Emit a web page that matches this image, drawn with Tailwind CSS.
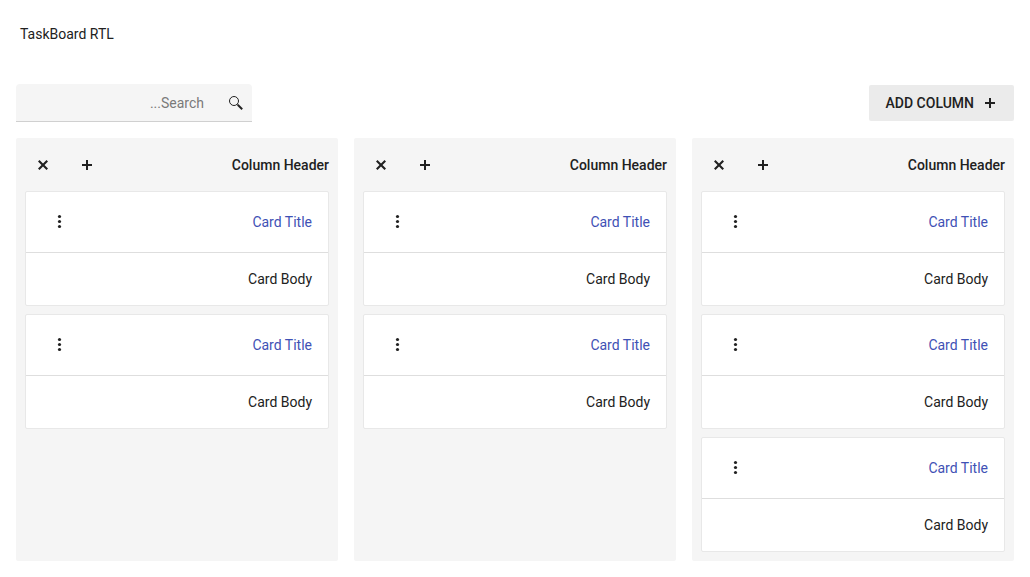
<!DOCTYPE html>
<html lang="en">
<head>
<meta charset="utf-8">
<title>TaskBoard RTL</title>
<script src="https://cdn.jsdelivr.net/npm/@tailwindcss/browser@4"></script>
</head>
<body class="h-[577px] overflow-hidden bg-white font-['Roboto',sans-serif] text-sm leading-5 text-[#212121]">
<svg class="hidden">
  <symbol id="plus" viewBox="0 0 16 16"><path d="M7 3h2v4h4v2H9v4H7V9H3V7h4z"/></symbol>
  <symbol id="close" viewBox="0 0 16 16"><path d="M4.5 3 8 6.5 11.5 3 13 4.5 9.5 8l3.5 3.5-1.5 1.5L8 9.5 4.5 13 3 11.5 6.5 8 3 4.5z"/></symbol>
  <symbol id="more" viewBox="0 0 16 16"><circle cx="7.5" cy="2.5" r="1.6"/><circle cx="7.5" cy="7.5" r="1.6"/><circle cx="7.5" cy="12.5" r="1.6"/></symbol>
  <symbol id="search" viewBox="0 0 16 16"><circle cx="6" cy="6" r="4.5" fill="none" stroke="currentColor" stroke-width="1"/><path d="M9 9.9 9.9 9l1 .6 4 4-1.4 1.4-4-4z"/></symbol>
</svg>
<h1 class="px-5 pt-6 font-normal">TaskBoard RTL</h1>
<main dir="rtl" class="px-4 pt-10">
  <div class="flex h-[38px] items-center justify-between">
    <button class="flex h-9 w-[145px] items-center gap-2 rounded-xs bg-[#ebebeb] px-4 font-medium">
      <svg class="size-4 shrink-0 fill-current"><use href="#plus"/></svg><span class="whitespace-nowrap">ADD COLUMN</span>
    </button>
    <div class="flex h-[38px] w-[236px] items-center rounded-t border-b border-[#d0d0d0] bg-[#f5f5f5] pl-2">
      <svg class="ml-6 mr-2 size-4 shrink-0 fill-current"><use href="#search"/></svg>
      <span class="text-[#7a7a7a]">Search...</span>
    </div>
  </div>
  <div id="board" class="mt-4 grid h-[423px] grid-cols-3 gap-4"></div>
</main>
<template id="column">
  <section class="rounded-xs bg-[#f5f5f5] px-[9px]">
    <header class="flex h-[53px] items-center pl-[10px]">
      <h2 class="grow font-medium">Column Header</h2>
      <svg class="ml-7 size-4 fill-current"><use href="#plus"/></svg>
      <svg class="size-4 fill-current"><use href="#close"/></svg>
    </header>
    <div class="cards flex flex-col gap-2"></div>
  </section>
</template>
<template id="card">
  <article class="h-[115px] rounded-xs border border-[#e8e8e8] bg-white">
    <header class="flex h-[61px] items-center justify-between border-b border-[#dedede] pl-[26px] pr-4">
      <span class="text-[#3f51b5]">Card Title</span>
      <svg class="size-4 fill-current"><use href="#more"/></svg>
    </header>
    <div class="px-4 py-4">Card Body</div>
  </article>
</template>
<script>
  const board = document.getElementById('board');
  for (const count of [3, 2, 2]) {
    const column = document.getElementById('column').content.cloneNode(true);
    const cards = column.querySelector('.cards');
    for (let i = 0; i < count; i++) cards.append(document.getElementById('card').content.cloneNode(true));
    board.append(column);
  }
</script>
</body>
</html>
